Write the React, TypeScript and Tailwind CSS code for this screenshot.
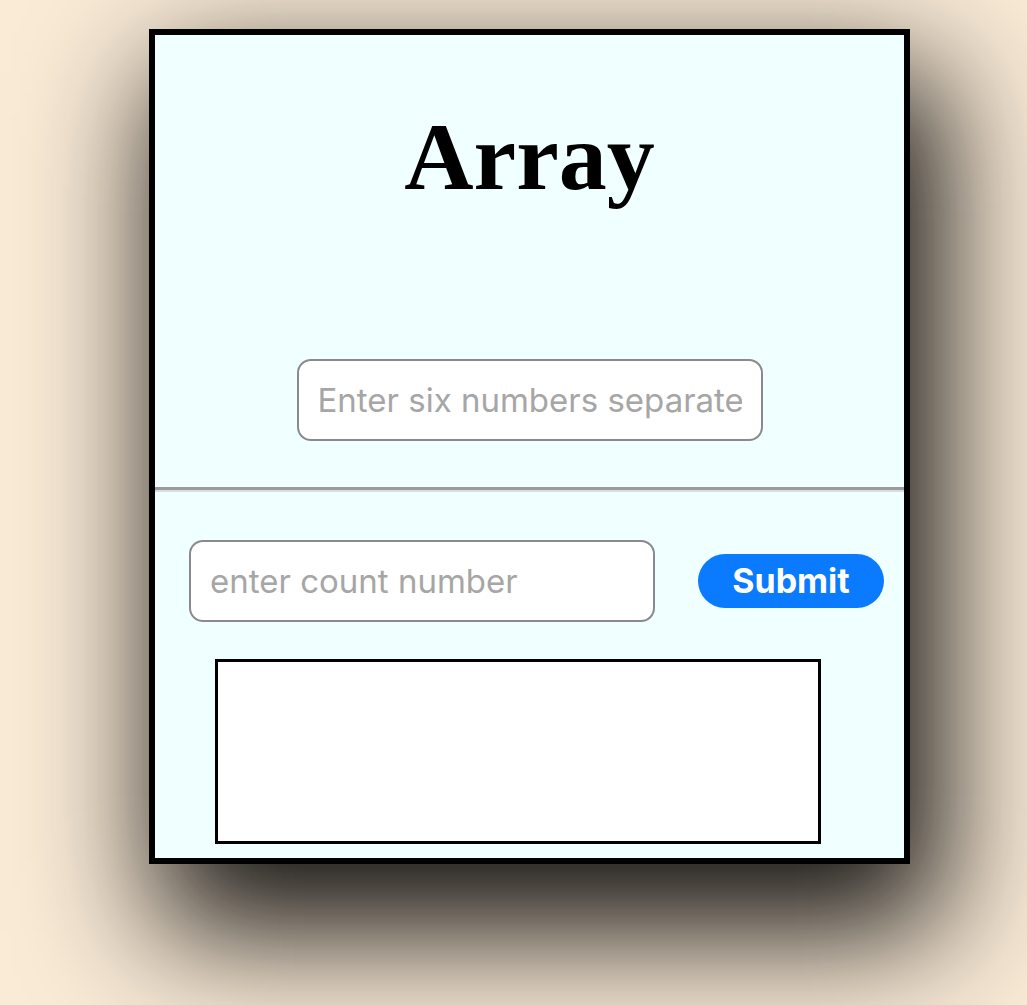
import React from 'react';

const App: React.FC = () => {
  return (
    <div className="min-h-[1005px] w-full bg-[#faebd7] pt-[29px] pl-[149px] overflow-hidden">
      {/* Card */}
      <div className="w-[761px] h-[835px] border-[6px] border-black bg-[#f0ffff] shadow-[20px_56px_120px_12px_rgba(0,0,0,0.92)] flex flex-col">
        {/* Top section */}
        <div className="h-[452px] flex flex-col items-center pt-[74px]">
          <h1 className="text-[96px] leading-none font-bold text-black font-['Liberation_Serif',serif]">
            Array
          </h1>
          <input
            type="text"
            placeholder="Enter six numbers separated by commas"
            className="mt-[154px] w-[466px] h-[82px] rounded-[14px] border-2 border-[#8a8a8e] bg-white px-[19px] text-[33px] text-black outline-none placeholder:text-[#a6a6a6] font-['Inter',sans-serif]"
          />
        </div>

        {/* Divider */}
        <div className="h-[3px] bg-[#9a9a9a]" />
        <div className="h-[2px] bg-[#dcdcdc]" />

        {/* Bottom section */}
        <div className="flex-1 flex flex-col pt-[48px] pl-[34px]">
          <div className="flex items-center gap-[43px]">
            <input
              type="text"
              placeholder="enter count number"
              className="w-[466px] h-[82px] rounded-[14px] border-2 border-[#8a8a8e] bg-white px-[19px] text-[33px] text-black outline-none placeholder:text-[#a6a6a6] font-['Inter',sans-serif]"
            />
            <button className="w-[186px] h-[54px] rounded-full bg-[#0a7aff] text-white text-[34px] font-bold leading-none font-['Inter',sans-serif]">
              Submit
            </button>
          </div>
          <div className="mt-[37px] ml-[26px] w-[606px] h-[185px] border-[3px] border-black bg-white" />
        </div>
      </div>
    </div>
  );
};

export default App;
